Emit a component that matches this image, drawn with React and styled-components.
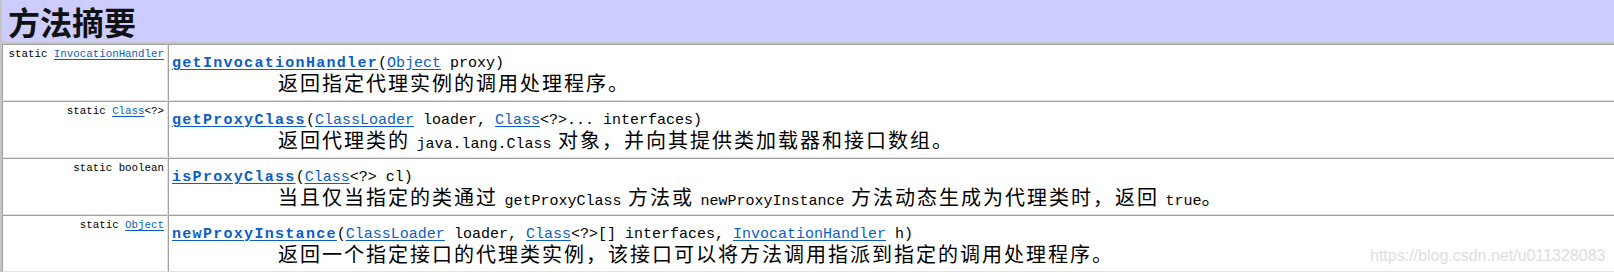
import React from 'react'
import styled, { createGlobalStyle } from 'styled-components'

const GlobalStyle = createGlobalStyle`
  html, body {
    margin: 0;
    padding: 0;
    background: #fff;
  }
`

const Page = styled.div`
  position: relative;
  width: 1614px;
  height: 274px;
  overflow: hidden;
  background: #fff;
`

const SummaryTable = styled.table`
  width: 1640px;
  border-collapse: separate;
  border-spacing: 0;
  border-left: 2px solid #c4c4c4;
  font-family: "Noto Sans CJK SC", sans-serif;
`

const HeaderCell = styled.th`
  background: #ccccff;
  text-align: left;
  padding: 0 0 0 6px;
  height: 42px;
  border-bottom: 2px solid #c4c4c4;
  font-family: "Noto Sans CJK SC", serif;
  font-size: 32px;
  font-weight: 700;
  line-height: 42px;
  color: #111;
  vertical-align: middle;
`

const TypeCell = styled.td`
  width: 158px;
  padding: 3px 3px;
  vertical-align: top;
  text-align: right;
  border-style: solid;
  border-width: 1px;
  border-color: #a0a0a0 #e2e2e2 #e2e2e2 #a0a0a0;
  font-family: "Liberation Mono", monospace;
  font-size: 10.8px;
  line-height: 13px;
  color: #000;
  white-space: nowrap;
`

const MethodCell = styled.td`
  padding: 2px 3px 5px;
  vertical-align: top;
  text-align: left;
  border-style: solid;
  border-width: 1px;
  border-color: #a0a0a0 #e2e2e2 #e2e2e2 #a0a0a0;
  font-size: 20px;
  line-height: 24px;
  color: #000;
  white-space: nowrap;
`

const Code = styled.code`
  font-family: "Liberation Mono", monospace;
  font-size: 15px;
  line-height: 15px;
  letter-spacing: 0;
`

const TypeLink = styled.a`
  color: #0a5ec9;
  text-decoration: underline;
  text-underline-offset: 2px;
`

const MethodName = styled.a`
  color: #0a5ec9;
  font-weight: 700;
  letter-spacing: 1.3px;
  text-decoration: underline;
  text-underline-offset: 2px;
`

const Description = styled.div`
  padding-left: 106px;
  letter-spacing: 2px;
`

const Watermark = styled.div`
  position: absolute;
  left: 1370px;
  top: 247px;
  font-family: "Liberation Sans", Arial, sans-serif;
  font-size: 16px;
  color: #dedede;
`

const methods = [
  {
    type: <>static <TypeLink href="#">InvocationHandler</TypeLink></>,
    name: 'getInvocationHandler',
    params: <>(<TypeLink href="#">Object</TypeLink> proxy)</>,
    desc: <>返回指定代理实例的调用处理程序。</>
  },
  {
    type: <>static <TypeLink href="#">Class</TypeLink>&lt;?&gt;</>,
    name: 'getProxyClass',
    params: <>(<TypeLink href="#">ClassLoader</TypeLink> loader, <TypeLink href="#">Class</TypeLink>&lt;?&gt;... interfaces)</>,
    desc: <>返回代理类的 <Code>java.lang.Class</Code> 对象，并向其提供类加载器和接口数组。</>
  },
  {
    type: <>static boolean</>,
    name: 'isProxyClass',
    params: <>(<TypeLink href="#">Class</TypeLink>&lt;?&gt; cl)</>,
    desc: <>当且仅当指定的类通过 <Code>getProxyClass</Code> 方法或 <Code>newProxyInstance</Code> 方法动态生成为代理类时，返回 <Code>true</Code>。</>
  },
  {
    type: <>static <TypeLink href="#">Object</TypeLink></>,
    name: 'newProxyInstance',
    params: <>(<TypeLink href="#">ClassLoader</TypeLink> loader, <TypeLink href="#">Class</TypeLink>&lt;?&gt;[] interfaces, <TypeLink href="#">InvocationHandler</TypeLink> h)</>,
    desc: <>返回一个指定接口的代理类实例，该接口可以将方法调用指派到指定的调用处理程序。</>
  }
]

const App = () => {
  return (
    <Page>
      <GlobalStyle />
      <SummaryTable>
        <thead>
          <tr>
            <HeaderCell colSpan={2}>方法摘要</HeaderCell>
          </tr>
        </thead>
        <tbody>
          {methods.map((m) => (
            <tr key={m.name}>
              <TypeCell>{m.type}</TypeCell>
              <MethodCell>
                <Code>
                  <MethodName href="#">{m.name}</MethodName>
                  {m.params}
                </Code>
                <Description>{m.desc}</Description>
              </MethodCell>
            </tr>
          ))}
        </tbody>
      </SummaryTable>
      <Watermark>https://blog.csdn.net/u011328083</Watermark>
    </Page>
  )
}

export default App
